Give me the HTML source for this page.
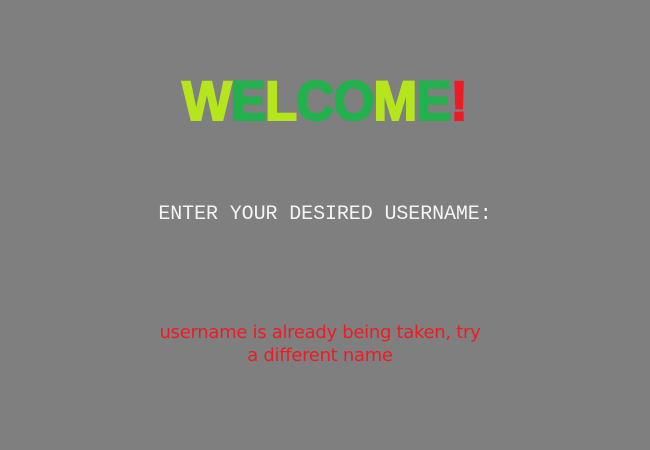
<!DOCTYPE html>
<html><head><style>
html,body{margin:0;padding:0;background:#7f7f7f;width:650px;height:450px;overflow:hidden}
.w{position:absolute;left:0;width:650px;top:61px;text-align:center;font-family:"Liberation Sans",sans-serif;font-weight:bold;font-size:56px;line-height:80px;letter-spacing:-1px}
.w span.in{display:inline-block;transform:scaleX(0.94);-webkit-text-stroke:2px currentColor}
.y{color:#b5e61d}.g{color:#22b14c}.r{color:#ed1c24}
.e{position:absolute;left:0;width:650px;top:201px;text-align:center;font-family:"Liberation Mono",monospace;font-size:20px;color:#f4f4f4;line-height:28px;letter-spacing:-0.1px}
.m{position:absolute;left:150px;width:340px;top:321px;text-align:center;font-family:"DejaVu Sans","Liberation Sans",sans-serif;font-size:18px;color:#ed1c24;line-height:23px;letter-spacing:-0.3px}
</style></head><body>
<div class="w"><span class="in"><span class="y">W</span><span class="g">E</span><span class="y">L</span><span class="g">C</span><span class="g">O</span><span class="y">M</span><span class="g">E</span><span class="r">!</span></span></div>
<div class="e">ENTER YOUR DESIRED USERNAME:</div>
<div class="m">username is already being taken, try<br>a different name</div>
</body></html>
